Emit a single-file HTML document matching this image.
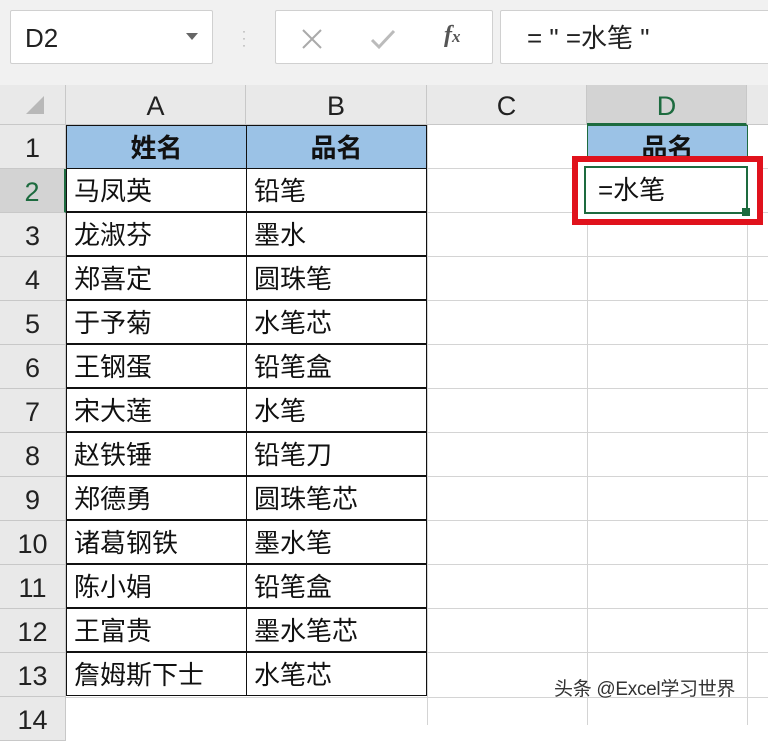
<!DOCTYPE html>
<html><head><meta charset="utf-8"><style>
*{margin:0;padding:0;box-sizing:border-box}
body{width:768px;height:712px;overflow:hidden;background:#fff;font-family:"Liberation Sans","Noto Sans CJK SC",sans-serif;position:relative}
.a{position:absolute}
.top{left:0;top:0;width:768px;height:85px;background:#f1f1f1}
.box{background:#fff;border:1px solid #d0d0d0;border-radius:2px}
.ch{top:85px;height:40px;background:#e9e9e9;border-right:1px solid #c8c8c8;border-bottom:1px solid #c8c8c8;text-align:center;font-size:27px;line-height:42px;color:#222}
.rh{left:0;width:66px;height:44px;background:#e9e9e9;border-bottom:1px solid #c8c8c8;border-right:1px solid #c8c8c8;text-align:center;font-size:27px;line-height:46px;color:#222}
.vl{top:125px;width:1px;height:600px;background:#d4d4d4}
.hl{left:66px;width:702px;height:1px;background:#d4d4d4}
.c{height:44px;font-size:26px;line-height:44px;padding-left:7px;color:#111;border:1px solid #111}
.h{background:#9bc2e6;font-weight:bold;text-align:center;padding:0}
</style></head><body>
<div class="a top"></div>
<div class="a box" style="left:10px;top:10px;width:203px;height:54px;font-size:26px;line-height:54px;padding-left:14px;color:#222">D2</div>
<div class="a" style="left:186px;top:33px;width:0;height:0;border-left:6px solid transparent;border-right:6px solid transparent;border-top:7px solid #666"></div>
<div class="a" style="left:242px;top:28px;color:#999;font-size:12px;line-height:7px">·<br>·<br>·</div>
<div class="a box" style="left:275px;top:10px;width:218px;height:54px"></div>
<svg class="a" style="left:300px;top:28px" width="24" height="22"><path d="M3 2L21 20M21 2L3 20" stroke="#aaa" stroke-width="2"/></svg>
<svg class="a" style="left:370px;top:28px" width="26" height="22"><path d="M2 12L9 19L24 3" stroke="#bbb" stroke-width="3" fill="none"/></svg>
<div class="a" style="left:444px;top:22px;font-family:'Liberation Serif',serif;font-style:italic;font-weight:bold;font-size:24px;color:#555">f<span style="font-size:17px">x</span></div>
<div class="a box" style="left:500px;top:10px;width:280px;height:54px;font-size:26px;line-height:54px;padding-left:26px;color:#222;white-space:pre">= " =水笔 "</div>

<div class="a" style="left:0;top:85px;width:66px;height:40px;background:#e9e9e9;border-right:1px solid #c8c8c8;border-bottom:1px solid #c8c8c8"></div>
<div class="a" style="left:26px;top:96px;width:0;height:0;border-left:18px solid transparent;border-bottom:18px solid #b8b8b8"></div>
<div class="a ch" style="left:66px;width:180px">A</div>
<div class="a ch" style="left:246px;width:181px">B</div>
<div class="a ch" style="left:427px;width:160px">C</div>
<div class="a ch" style="left:587px;width:160px;background:#d3d3d3;color:#1d6b3f;border-bottom:2px solid #1d6b3f">D</div>
<div class="a ch" style="left:747px;width:30px"></div>

<div class="a vl" style="left:587px"></div><div class="a vl" style="left:747px"></div><div class="a vl" style="left:427px"></div>
<div class="a hl" style="top:168px"></div><div class="a hl" style="top:212px"></div><div class="a hl" style="top:256px"></div><div class="a hl" style="top:300px"></div><div class="a hl" style="top:344px"></div><div class="a hl" style="top:388px"></div><div class="a hl" style="top:432px"></div><div class="a hl" style="top:476px"></div><div class="a hl" style="top:520px"></div><div class="a hl" style="top:564px"></div><div class="a hl" style="top:608px"></div><div class="a hl" style="top:652px"></div><div class="a hl" style="top:697px"></div>

<div class="a rh" style="top:125px">1</div>
<div class="a rh" style="top:169px;background:#d3d3d3;color:#1d6b3f;border-right:2px solid #1d6b3f">2</div>
<div class="a rh" style="top:213px">3</div><div class="a rh" style="top:257px">4</div><div class="a rh" style="top:301px">5</div><div class="a rh" style="top:345px">6</div><div class="a rh" style="top:389px">7</div><div class="a rh" style="top:433px">8</div><div class="a rh" style="top:477px">9</div><div class="a rh" style="top:521px">10</div><div class="a rh" style="top:565px">11</div><div class="a rh" style="top:609px">12</div><div class="a rh" style="top:653px">13</div><div class="a rh" style="top:697px">14</div>

<div class="a c h" style="left:66px;top:125px;width:181px">姓名</div>
<div class="a c h" style="left:246px;top:125px;width:181px">品名</div>
<div class="a c" style="left:66px;top:168px;width:181px">马凤英</div><div class="a c" style="left:246px;top:168px;width:181px">铅笔</div>
<div class="a c" style="left:66px;top:212px;width:181px">龙淑芬</div><div class="a c" style="left:246px;top:212px;width:181px">墨水</div>
<div class="a c" style="left:66px;top:256px;width:181px">郑喜定</div><div class="a c" style="left:246px;top:256px;width:181px">圆珠笔</div>
<div class="a c" style="left:66px;top:300px;width:181px">于予菊</div><div class="a c" style="left:246px;top:300px;width:181px">水笔芯</div>
<div class="a c" style="left:66px;top:344px;width:181px">王钢蛋</div><div class="a c" style="left:246px;top:344px;width:181px">铅笔盒</div>
<div class="a c" style="left:66px;top:388px;width:181px">宋大莲</div><div class="a c" style="left:246px;top:388px;width:181px">水笔</div>
<div class="a c" style="left:66px;top:432px;width:181px">赵铁锤</div><div class="a c" style="left:246px;top:432px;width:181px">铅笔刀</div>
<div class="a c" style="left:66px;top:476px;width:181px">郑德勇</div><div class="a c" style="left:246px;top:476px;width:181px">圆珠笔芯</div>
<div class="a c" style="left:66px;top:520px;width:181px">诸葛钢铁</div><div class="a c" style="left:246px;top:520px;width:181px">墨水笔</div>
<div class="a c" style="left:66px;top:564px;width:181px">陈小娟</div><div class="a c" style="left:246px;top:564px;width:181px">铅笔盒</div>
<div class="a c" style="left:66px;top:608px;width:181px">王富贵</div><div class="a c" style="left:246px;top:608px;width:181px">墨水笔芯</div>
<div class="a c" style="left:66px;top:652px;width:181px">詹姆斯下士</div><div class="a c" style="left:246px;top:652px;width:181px">水笔芯</div>

<div class="a c h" style="left:587px;top:125px;width:161px;border-color:#1d6b3f">品名</div>
<div class="a" style="left:572px;top:156px;width:191px;height:69px;border:6px solid #e0121c;background:#fff"></div>
<div class="a" style="left:584px;top:166px;width:164px;height:48px;border:2px solid #1d6b3f;font-size:26px;line-height:44px;padding-left:12px;color:#111">=水笔</div>
<div class="a" style="left:742px;top:208px;width:8px;height:8px;background:#1d6b3f"></div>

<div class="a" style="left:554px;top:674px;font-size:19px;letter-spacing:-0.3px;color:#333;text-shadow:0 0 2px #fff;white-space:nowrap">头条 @Excel学习世界</div>
</body></html>
